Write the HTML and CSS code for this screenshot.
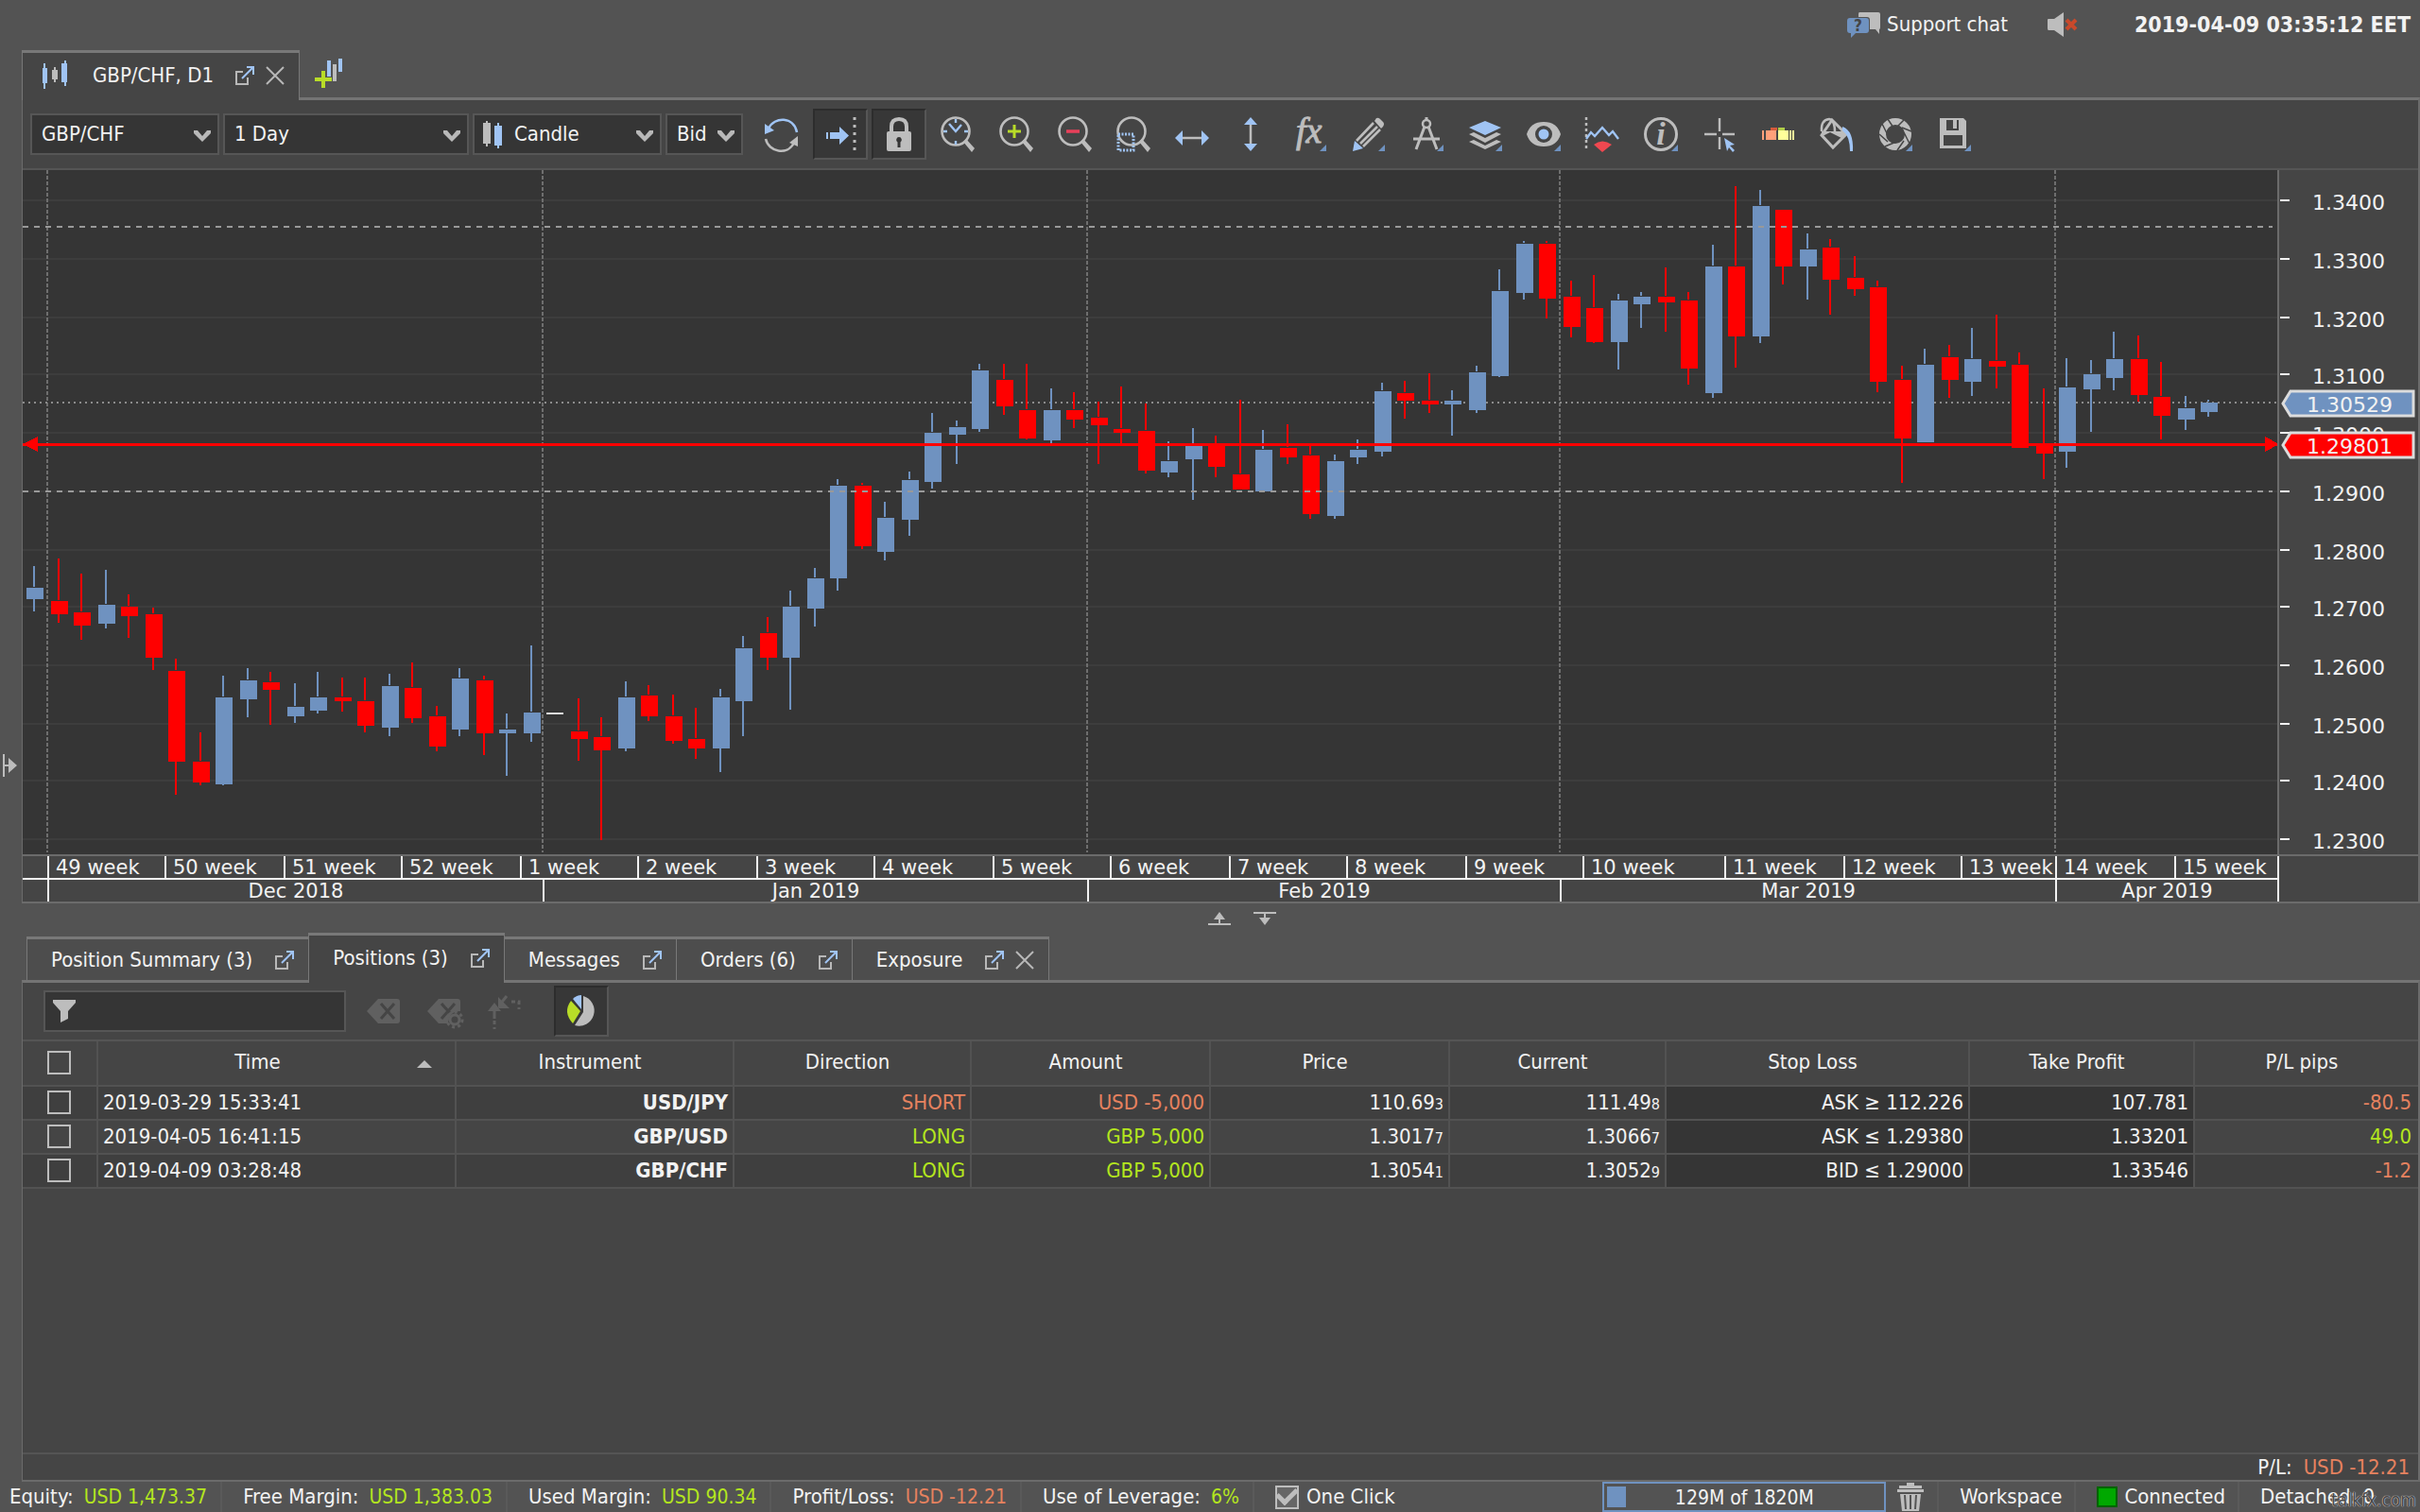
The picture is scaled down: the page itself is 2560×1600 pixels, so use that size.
FILE: index.html
```html
<!DOCTYPE html>
<html lang="en">
<head>
<meta charset="utf-8">
<title>GBP/CHF, D1</title>
<link rel="stylesheet" href="styles.css">
</head>
<body>
<svg class="defs" aria-hidden="true">
  <symbol id="popout" viewBox="0 0 22 22"><path d="M9 7H2v13h12v-7" fill="none" stroke="#b8b8b8" stroke-width="2"/><path d="M8 14 19 3M13 2h7v8" fill="none" stroke="#a0c4f4" stroke-width="2"/></symbol>
  <symbol id="close" viewBox="0 0 22 22"><path d="M2 2 20 20M20 2 2 20" fill="none" stroke="#b8b8b8" stroke-width="2"/></symbol>
  <symbol id="chev" viewBox="0 0 20 14"><path d="M1 1h4l5 6 5-6h4v3l-9 9-9-9z" fill="#b8b8b8"/></symbol>
  <symbol id="corner" viewBox="0 0 40 40"><path d="M38 31v7h-7z" fill="#6f92c0"/></symbol>
  <symbol id="lens" viewBox="0 0 40 40"><circle cx="18" cy="17" r="14.5" fill="none" stroke="#bdbdbd" stroke-width="2.6"/><path d="M26 28l3-3 9 10-3 4z" fill="#bdbdbd"/></symbol>
</svg>

<header class="topbar">
  <a class="support" href="#chat">
    <svg class="ico-chat" viewBox="0 0 36 28"><path d="M13 1h20q2 0 2 2v14q0 2-1 2v5l-4-5h-6V9q0-3-3-3h-9V3q0-2 1-2z" fill="#bdbdbd"/><path d="M3 7h17q3 0 3 3v10q0 3-3 3H9l-5 5v-5H3q-3 0-3-3V10q0-3 3-3z" fill="#6f92c0"/><text x="11.500" y="21" class="chat-q">?</text></svg>
    <span>Support chat</span>
  </a>
  <button class="plain" aria-label="Sound off"><svg class="ico-sound" viewBox="0 0 34 28"><path d="M0 9q0-1 1-1h6L17 1v26L7 20H1q-1 0-1-2z" fill="#bdbdbd"/><path d="M20 9l10 10M30 9 20 19" stroke="#c9492b" stroke-width="4"/></svg></button>
  <time class="clock">2019-04-09 03:35:12 EET</time>
</header>

<div class="main">
  <aside class="rail"><svg class="ico-rail" viewBox="0 0 16 26"><path d="M1 1v24M1 13h7" stroke="#bdbdbd" stroke-width="2"/><path d="M6 5l9 8-9 8z" fill="#bdbdbd"/></svg></aside>
  <div class="column">
    <div class="tabs chart-tabs">
      <div class="tab active">
        <svg class="ico-candles" viewBox="0 0 28 32"><path d="M3 3v27M25 0v27" stroke="#a0c4f4" stroke-width="2"/><path d="M1 8h5v16H1zM21 3h6v20h-6z" fill="#a0c4f4"/><path d="M14 7v16" stroke="#bdbdbd" stroke-width="2"/><path d="M11 10h6v10h-6z" fill="#bdbdbd"/></svg>
        <button class="plain label">GBP/CHF, D1</button>
        <button class="plain" aria-label="Detach"><svg class="ico-s"><use href="#popout"/></svg></button>
        <button class="plain" aria-label="Close"><svg class="ico-s"><use href="#close"/></svg></button>
      </div>
      <button class="plain add" aria-label="New chart"><svg class="ico-add" viewBox="0 0 30 32"><path d="M15 3v17M27 1v14" stroke="#a0c4f4" stroke-width="4"/><path d="M21 7v18" stroke="#bdbdbd" stroke-width="4"/><path d="M9 14v18M0 23h18" stroke="#b8dc28" stroke-width="4"/></svg></button>
    </div>

    <section class="panel">
      <div class="toolbar">
        <div class="pick p1"><select aria-label="Instrument"><option>GBP/CHF</option></select><svg class="ico-chev"><use href="#chev"/></svg></div>
        <div class="pick p2"><select aria-label="Period"><option>1 Day</option></select><svg class="ico-chev"><use href="#chev"/></svg></div>
        <div class="pick p3"><svg class="ico-type" viewBox="0 0 22 30"><path d="M5 1v27" stroke="#bdbdbd" stroke-width="2"/><path d="M1 3h8v22H1z" fill="#bdbdbd"/><path d="M17 3v27" stroke="#a0c4f4" stroke-width="2"/><path d="M13 6h8v21h-8z" fill="#a0c4f4"/></svg><select aria-label="Chart type"><option>Candle</option></select><svg class="ico-chev"><use href="#chev"/></svg></div>
        <div class="pick p4"><select aria-label="Side"><option>Bid</option></select><svg class="ico-chev"><use href="#chev"/></svg></div>
        <div class="tools">
          <button aria-label="Refresh"><svg viewBox="0 0 40 40"><path d="M6 14C12 1 33 1 36 18" fill="none" stroke="#a0c4f4" stroke-width="2.500"/><path d="M2 9v11l10-4z" fill="#a0c4f4"/><path d="M3 25c3 14 23 18 30 4" fill="none" stroke="#bdbdbd" stroke-width="2.500"/><path d="M37 22v11l-9-4z" fill="#bdbdbd"/></svg></button>
          <button class="on" aria-label="Autoshift"><svg viewBox="0 0 40 40"><path d="M35 2v36" stroke="#bdbdbd" stroke-width="3" stroke-dasharray="3 5"/><path d="M5 18h2v7H5zM9 18h10v-6l10 9.500-10 9.500v-6H9z" fill="#a0c4f4"/></svg></button>
          <button class="on" aria-label="Lock"><svg viewBox="0 0 40 40"><path d="M12 18v-6q0-8 8-8t8 8v6" fill="none" stroke="#bdbdbd" stroke-width="4"/><rect x="7" y="17" width="26" height="21" rx="2" fill="#bdbdbd"/><path d="M20 23a3 3 0 0 1 1.500 5.500V34h-3v-5.500A3 3 0 0 1 20 23z" fill="#353535"/></svg></button>
          <button aria-label="Zoom to period"><svg viewBox="0 0 40 40"><use href="#lens"/><path d="M18 4v4M18 27v4M5 17h4M27 17h4M11 9l7 8 6-7" fill="none" stroke="#a0c4f4" stroke-width="2.400"/></svg></button>
          <button aria-label="Zoom in"><svg viewBox="0 0 40 40"><use href="#lens"/><path d="M18 10v14M11 17h14" stroke="#b8dc28" stroke-width="3"/></svg></button>
          <button aria-label="Zoom out"><svg viewBox="0 0 40 40"><use href="#lens"/><path d="M11 17h14" stroke="#e8405a" stroke-width="3.500"/></svg></button>
          <button aria-label="Zoom area"><svg viewBox="0 0 40 40"><use href="#lens"/><path d="M4 20h16v17H4z" fill="none" stroke="#a0c4f4" stroke-width="3" stroke-dasharray="2 1.500"/></svg></button>
          <button aria-label="Fit width"><svg viewBox="0 0 40 40"><path d="M8 24h24" stroke="#bdbdbd" stroke-width="2.500"/><path d="M10 16v16l-8-8zM30 16v16l8-8z" fill="#a0c4f4"/></svg></button>
          <button aria-label="Fit height"><svg viewBox="0 0 40 40"><path d="M20 8v24" stroke="#bdbdbd" stroke-width="2.500"/><path d="M13 10h14l-7-8zM13 30h14l-7 8z" fill="#a0c4f4"/></svg></button>
          <button aria-label="Indicators"><svg viewBox="0 0 40 40"><text x="6" y="29" class="fx">fx</text><use href="#corner"/></svg></button>
          <button aria-label="Drawings"><svg viewBox="0 0 40 40"><path d="M29 3q2-1 4 1l3 3q2 2 0 5l-2 2-7-8z" fill="#bdbdbd"/><path d="M8 27 26 8M12 30 30 12M15 33 33 15" stroke="#bdbdbd" stroke-width="2.600"/><path d="M6 27l9 8-11 3z" fill="#a0c4f4"/><use href="#corner"/></svg></button>
          <button aria-label="Measure"><svg viewBox="0 0 40 40"><path d="M20 2v5M18 12 9 36M22 12l9 24M6 25h28" fill="none" stroke="#bdbdbd" stroke-width="3"/><circle cx="20" cy="9" r="4" fill="#454545" stroke="#bdbdbd" stroke-width="2.500"/><use href="#corner"/></svg></button>
          <button aria-label="Layers"><svg viewBox="0 0 40 40"><path d="M20 6l17 7-17 8L3 13z" fill="#a0c4f4"/><path d="M3 20l5-2 12 6 12-6 5 2-17 9zM3 28l5-2 12 6 12-6 5 2-17 8z" fill="#bdbdbd"/><use href="#corner"/></svg></button>
          <button aria-label="Visibility"><svg viewBox="0 0 40 40"><path d="M2 20q4-13 18-13t18 13q-4 13-18 13T2 20z" fill="#bdbdbd"/><circle cx="20" cy="20" r="9" fill="#454545"/><circle cx="20" cy="20" r="5.500" fill="#a0c4f4"/><use href="#corner"/></svg></button>
          <button aria-label="Show trades"><svg viewBox="0 0 40 40"><path d="M3 2v36" stroke="#bdbdbd" stroke-width="2.500" stroke-dasharray="3 3"/><path d="M3 25l5-7 4 4 8-9 7 8 4-4 6 8" fill="none" stroke="#a0c4f4" stroke-width="2.400"/><path d="M11 31q9-7 19 0l-10 8z" fill="#f04850"/></svg></button>
          <button aria-label="Information"><svg viewBox="0 0 40 40"><circle cx="20" cy="20" r="16.500" fill="none" stroke="#bdbdbd" stroke-width="3"/><text x="20" y="31" class="info">i</text><use href="#corner"/></svg></button>
          <button aria-label="Crosshair"><svg viewBox="0 0 40 40"><path d="M20 3v14M20 23v13M4 20h13M23 20h13" stroke="#bdbdbd" stroke-width="2.400"/><path d="M25 24l11 7-5 1 5 5-2 2-4-5-2 4z" fill="#a0c4f4"/></svg></button>
          <button aria-label="Depth"><svg viewBox="0 0 40 40"><path d="M3 16h2v10H3zM7 16h11v10H7z" fill="#ffa07a"/><path d="M12 13h7v3h-7z" fill="#d65b3c"/><path d="M20 16h11v10H20zM32 16h2v10h-2zM35 16h2v10h-2z" fill="#ffff9a"/><path d="M20 13h7v3h-7z" fill="#b0cc48"/></svg></button>
          <button aria-label="Theme"><svg viewBox="0 0 40 40"><path d="M15 5 30 20 16 34 4 21z" fill="none" stroke="#bdbdbd" stroke-width="3"/><path d="M4 17q-1-12 8-13 6 1 6 14" fill="none" stroke="#bdbdbd" stroke-width="2.500"/><path d="M4 17h24l3 3-6 4-12-6-8 4z" fill="#bdbdbd"/><path d="M26 12q12 4 11 26h-3q0-16-8-22z" fill="#a0c4f4"/></svg></button>
          <button aria-label="Snapshot"><svg viewBox="0 0 40 40"><circle cx="20" cy="20" r="13.500" fill="none" stroke="#bdbdbd" stroke-width="7"/><path d="M12 4l6 9M29 5l-7 7M37 17l-10-4M35 30l-6-12M22 37l7-10M9 33l12-5M3 20l9 8M6 9l5 10" stroke="#454545" stroke-width="1.500"/><use href="#corner"/></svg></button>
          <button aria-label="Save"><svg viewBox="0 0 40 40"><path d="M5 3h25l3 3v29H5z" fill="#bdbdbd"/><path d="M12 5h13v11H12zM9 21h20v11H9z" fill="#454545"/><path d="M19 5h4v9h-4z" fill="#bdbdbd"/><use href="#corner"/></svg></button>
        </div>
      </div>
      <svg class="chart" id="chart" viewBox="24 180 2534 724" role="img" aria-label="GBP/CHF daily candles"></svg>
      <div class="axis">
        <div class="spans">
          <div class="weeks" id="weeks"></div>
          <div class="months" id="months"></div>
        </div>
      </div>
    </section>

    <div class="splitter">
      <svg viewBox="0 0 24 14"><path d="M12 0l6 8h-5v4h11v2H0v-2h11V8H6z" fill="#bdbdbd"/></svg>
      <svg viewBox="0 0 24 14"><path d="M12 14l6-8h-5V2h11V0H0v2h11v4H6z" fill="#bdbdbd"/></svg>
    </div>

    <div class="tabs low-tabs">
      <div class="tab"><button class="plain label">Position Summary (3)</button><button class="plain" aria-label="Detach"><svg class="ico-s"><use href="#popout"/></svg></button></div>
      <div class="tab active"><button class="plain label">Positions (3)</button><button class="plain" aria-label="Detach"><svg class="ico-s"><use href="#popout"/></svg></button></div>
      <div class="tab"><button class="plain label">Messages</button><button class="plain" aria-label="Detach"><svg class="ico-s"><use href="#popout"/></svg></button></div>
      <div class="tab"><button class="plain label">Orders (6)</button><button class="plain" aria-label="Detach"><svg class="ico-s"><use href="#popout"/></svg></button></div>
      <div class="tab closable"><button class="plain label">Exposure</button><button class="plain" aria-label="Detach"><svg class="ico-s"><use href="#popout"/></svg></button><button class="plain" aria-label="Close"><svg class="ico-s"><use href="#close"/></svg></button></div>
    </div>

    <section class="panel positions">
      <div class="filterbar">
        <div class="filter"><svg class="ico-funnel" viewBox="0 0 24 24"><path d="M0 0h24v3l-8 9v8l-8 4V12L0 3z" fill="#bdbdbd"/></svg><input type="text" aria-label="Filter"></div>
        <button class="plain dim" aria-label="Close position"><svg viewBox="0 0 40 40"><path d="M14 7h20q3 0 3 3v20q0 3-3 3H14L2 20z" fill="#606060"/><path d="M17 12l14 16M31 12 17 28" stroke="#454545" stroke-width="3"/></svg></button>
        <button class="plain dim" aria-label="Close with conditions"><svg viewBox="0 0 40 40"><path d="M14 7h20q3 0 3 3v10q-12 0-13 13H14L2 20z" fill="#606060"/><path d="M17 12l9 10M31 12 17 28" stroke="#454545" stroke-width="3"/><circle cx="31" cy="29" r="5" fill="none" stroke="#606060" stroke-width="3"/><circle cx="31" cy="29" r="8" fill="none" stroke="#606060" stroke-width="3" stroke-dasharray="3 3.200"/></svg></button>
        <button class="plain dim" aria-label="Reverse"><svg viewBox="0 0 40 40"><path d="M9 28V16M14 14l8-10" fill="none" stroke="#606060" stroke-width="3"/><path d="M2 20l7-9 7 9zM13 5v12h12z" fill="#606060"/><path d="M27 10h8v8M9 30v9" fill="none" stroke="#606060" stroke-width="3" stroke-dasharray="4 3"/></svg></button>
        <button class="on" aria-label="Exposure chart"><svg viewBox="0 0 40 40"><path d="M22 21V4a16 16 0 1 1-9 31z" fill="#bdbdbd"/><path d="M19 20 11 33Q0 21 9 9z" fill="#b8dc28"/><path d="M20 18 11 7q4-4 9-4z" fill="#a0c4f4"/></svg></button>
      </div>
      <table>
        <colgroup><col class="c0"><col class="c1"><col class="c2"><col class="c3"><col class="c4"><col class="c5"><col class="c6"><col class="c7"><col class="c8"><col class="c9"></colgroup>
        <thead><tr>
          <th class="tick"><input type="checkbox" aria-label="Select all"></th>
          <th class="sorted">Time<svg class="ico-sort" viewBox="0 0 16 8"><path d="M8 0l8 8H0z" fill="#bdbdbd"/></svg></th>
          <th>Instrument</th><th>Direction</th><th>Amount</th><th>Price</th><th>Current</th><th>Stop Loss</th><th>Take Profit</th><th>P/L pips</th>
        </tr></thead>
        <tbody>
          <tr><td class="tick"><input type="checkbox" aria-label="USD/JPY"></td><td class="time">2019-03-29 15:33:41</td><td class="bold">USD/JPY</td><td class="neg">SHORT</td><td class="neg">USD -5,000</td><td>110.69<small>3</small></td><td>111.49<small>8</small></td><td class="edit">ASK ≥ 112.226</td><td class="edit">107.781</td><td class="neg">-80.5</td></tr>
          <tr><td class="tick"><input type="checkbox" aria-label="GBP/USD"></td><td class="time">2019-04-05 16:41:15</td><td class="bold">GBP/USD</td><td class="pos">LONG</td><td class="pos">GBP 5,000</td><td>1.3017<small>7</small></td><td>1.3066<small>7</small></td><td class="edit">ASK ≤ 1.29380</td><td class="edit">1.33201</td><td class="pos">49.0</td></tr>
          <tr><td class="tick"><input type="checkbox" aria-label="GBP/CHF"></td><td class="time">2019-04-09 03:28:48</td><td class="bold">GBP/CHF</td><td class="pos">LONG</td><td class="pos">GBP 5,000</td><td>1.3054<small>1</small></td><td>1.3052<small>9</small></td><td class="edit">BID ≤ 1.29000</td><td class="edit">1.33546</td><td class="neg">-1.2</td></tr>
        </tbody>
      </table>
      <div class="total"><span>P/L:</span><span class="neg">USD -12.21</span></div>
    </section>
  </div>
</div>

<footer class="status">
  <div class="stat"><span>Equity:</span><span class="sum pos">USD 1,473.37</span></div>
  <div class="stat"><span>Free Margin:</span><span class="sum pos">USD 1,383.03</span></div>
  <div class="stat"><span>Used Margin:</span><span class="sum pos">USD 90.34</span></div>
  <div class="stat"><span>Profit/Loss:</span><span class="sum neg">USD -12.21</span></div>
  <div class="stat"><span>Use of Leverage:</span><span class="sum pos">6%</span></div>
  <label class="oneclick"><input type="checkbox" checked>One Click</label>
  <div class="right">
    <div class="memory"><div class="used"></div><span>129M of 1820M</span></div>
    <button class="plain trash" aria-label="Free memory"><svg viewBox="0 0 28 30"><path d="M10 3V0h8v3h8v3H2V3zM0 7h28v3H0z" fill="#bdbdbd"/><path d="M3 12h22l-2 18H5z" fill="#bdbdbd"/><path d="M8 13l1 15M14 13v15M20 13l-1 15" stroke="#555" stroke-width="2"/></svg></button>
    <div class="stat">Workspace</div>
    <div class="stat conn"><i class="lamp"></i>Connected</div>
    <div class="stat last">Detached: 0<span class="mark">talkfx.com</span></div>
  </div>
</footer>
<script src="chart.js"></script>
</body>
</html>
```
FILE: styles.css
```css
* { box-sizing: border-box; }
body { margin: 0; min-height: 100vh; display: flex; flex-direction: column; background: #535353; color: #f2f2f2; font: 22px/28px "DejaVu Sans Condensed", "Noto Sans", sans-serif; }
button, input, select { font: inherit; color: inherit; }
button { cursor: pointer; }
.plain { border: 0; background: none; padding: 0; display: block; }
.defs { position: absolute; width: 0; height: 0; }
svg { display: block; flex: none; overflow: visible; }
.pos { color: #b4e61e; }
.neg { color: #e6825f; }

.topbar { height: 53px; display: flex; justify-content: flex-end; align-items: flex-start; padding: 12px 10px 0 0; }
.support { display: flex; gap: 6px; color: inherit; text-decoration: none; margin-right: 42px; }
.ico-chat { width: 36px; height: 28px; }
.chat-q { font-size: 17px; font-weight: 700; fill: #454545; text-anchor: middle; }
.ico-sound { width: 34px; height: 28px; }
.clock { font-size: 23px; font-weight: 700; margin-left: 58px; }

.main { flex: 1; display: flex; }
.rail { width: 23px; padding: 744px 0 0 3px; }
.ico-rail { width: 16px; height: 26px; }
.column { flex: 1; min-width: 0; display: flex; flex-direction: column; }

.tabs { display: flex; align-items: flex-end; }
.tab { display: flex; align-items: center; border: 1px solid #787878; border-top: 3px solid #787878; border-bottom: 0; background: #4d4d4d; }
.tab.active { background: #454545; margin-bottom: -3px; z-index: 1; }
.ico-s { width: 22px; height: 22px; }
.chart-tabs { height: 50px; }
.chart-tabs .tab { height: 53px; padding: 0 14px 3px 20px; gap: 10px; }
.chart-tabs .label { margin: 0 12px 0 16px; }
.ico-candles { width: 28px; height: 32px; }
.add { align-self: flex-start; padding: 8px 16px; }
.ico-add { width: 30px; height: 32px; }

.panel { border: 2px solid #6b6b6b; border-top: 3px solid #747474; border-left-width: 1px; background: #454545; }
.toolbar { height: 74px; display: flex; align-items: center; padding: 0 8px; gap: 4px; border-bottom: 2px solid #555; }
.pick { position: relative; height: 44px; border: 2px solid #565656; background: #353535; display: flex; align-items: center; }
.pick select { appearance: none; border: 0; background: none; width: 100%; height: 100%; padding: 0 32px 0 10px; outline: 0; }
.pick .ico-type + select { padding-left: 12px; }
.ico-chev { position: absolute; right: 6px; top: 15px; width: 20px; height: 14px; pointer-events: none; }
.ico-type { width: 22px; height: 30px; margin-left: 8px; }
.p1 { width: 200px; }
.p2 { width: 260px; }
.p3 { width: 200px; }
.p4 { width: 82px; }
.tools { display: flex; gap: 4px; margin-left: 8px; }
.tools button, .filterbar .on { width: 58px; height: 54px; border: 2px solid transparent; background: none; padding: 0; display: grid; place-items: center; }
.tools svg, .filterbar button svg { width: 40px; height: 40px; }
.tools .on, .filterbar .on { background: #373737; border-color: #2d2d2d #565656 #565656 #2d2d2d; }
.fx { font: italic 38px "Liberation Serif", serif; fill: #bdbdbd; stroke: #bdbdbd; stroke-width: 1px; }
.info { font: italic 700 34px "Liberation Serif", serif; fill: #bdbdbd; text-anchor: middle; }

.chart { width: 100%; height: auto; background: #454545; font: 22px "DejaVu Sans", sans-serif; shape-rendering: crispEdges; }
.chart .tag { shape-rendering: auto; stroke: #dcdcdc; stroke-width: 3; }
.chart text { fill: #f2f2f2; }
.axis { display: grid; grid-template-columns: 2387fr 147fr; border-top: 2px solid #6b6b6b; font: 21px/24px "DejaVu Sans", sans-serif; }
.spans { border-right: 2px solid #f2f2f2; }
.weeks, .months { display: grid; }
.weeks { border-bottom: 2px solid #f2f2f2; }
.weeks span, .months span { height: 23px; white-space: nowrap; border-left: 2px solid #f2f2f2; }
.weeks span { padding-left: 7px; }
.months span { text-align: center; }
.weeks span:first-child, .months span:first-child { border-left: 0; }

.splitter { height: 31px; display: flex; justify-content: center; gap: 24px; padding: 9px 0 0 44px; }
.splitter svg { width: 24px; height: 14px; }

.low-tabs { padding-left: 5px; height: 50px; }
.low-tabs .tab { height: 46px; padding: 0 14px 0 25px; gap: 23px; margin-right: -1px; }
.low-tabs .tab.active { height: 53px; padding-bottom: 3px; }
.low-tabs .closable .plain:last-child { margin-left: -13px; }

.positions { flex: 1; display: flex; flex-direction: column; }
.filterbar { height: 62px; display: flex; align-items: center; padding: 0 22px; border-bottom: 2px solid #555; }
.filter { width: 320px; height: 44px; border: 2px solid #565656; background: #353535; display: flex; align-items: center; padding-left: 8px; margin-right: 20px; }
.filter input { border: 0; background: none; flex: 1; min-width: 0; outline: 0; }
.ico-funnel { width: 24px; height: 24px; }
.dim { margin-right: 24px; }
.filterbar .on { margin-left: 8px; }
table { width: 100%; table-layout: fixed; border-collapse: separate; border-spacing: 0; }
th, td { border-right: 2px solid #525252; border-bottom: 2px solid #525252; white-space: nowrap; }
th:last-child, td:last-child { border-right: 0; }
th { height: 48px; font-weight: 400; padding: 0 10px 2px 0; position: relative; }
th.sorted { padding-right: 40px; }
.ico-sort { position: absolute; right: 24px; top: 20px; width: 16px; height: 8px; }
td { height: 36px; padding: 0 5px; text-align: right; line-height: 32px; }
td:last-child { padding-right: 7px; }
tbody tr:nth-child(odd) { background: #3f3f3f; }
td.edit { background: #353535; }
td.time { text-align: left; }
.bold { font-weight: 700; }
small { font-size: 16px; line-height: 16px; }
.tick { text-align: left; padding: 0 0 2px 26px; }
input[type=checkbox] { appearance: none; display: block; width: 25px; height: 25px; margin: 0; border: 2px solid #bdbdbd; background: none; }
.c0 { width: 80px; }
.c1 { width: 379px; }
.c2 { width: 294px; }
.c3 { width: 251px; }
.c4 { width: 253px; }
.c5 { width: 253px; }
.c6 { width: 229px; }
.c7 { width: 321px; }
.c8 { width: 238px; }
.total { margin-top: auto; border-top: 2px solid #555; height: 29px; display: flex; justify-content: flex-end; gap: 12px; padding-right: 9px; }

.status { height: 32px; display: flex; line-height: 32px; }
.stat { display: flex; gap: 11px; padding: 0 14px 0 22px; border-right: 2px solid #5a5a5a; white-space: nowrap; }
.stat:first-child { padding-left: 10px; }
.sum { font-size: 21px; }
.oneclick { display: flex; align-items: center; gap: 8px; padding-left: 22px; }
.oneclick input:checked { display: grid; place-items: center; background: #666; }
.oneclick input:checked::after { content: ""; width: 16px; height: 9px; border: solid #bdbdbd; border-width: 0 0 5px 5px; transform: translateY(-3px) rotate(-45deg); }
.right { margin-left: auto; display: flex; }
.memory { position: relative; width: 300px; height: 32px; border: 2px solid #6f92c0; padding: 3px; text-align: center; line-height: 24px; font-size: 21px; }
.memory .used { position: absolute; left: 3px; top: 3px; bottom: 3px; width: 20px; background: #6f92c0; }
.trash { width: 56px; padding: 0 14px 0 12px; border-right: 2px solid #5a5a5a; }
.trash svg { width: 28px; height: 30px; }
.conn { gap: 7px; }
.lamp { width: 22px; height: 22px; margin-top: 5px; background: #00a800; border: 2px solid #006400; }
.right .stat { padding-right: 13px; }
.right .last { border: 0; position: relative; width: 191px; }
.mark { position: absolute; right: 4px; bottom: 0; font-size: 19px; line-height: 26px; color: #484848; text-shadow: 0 0 1px #ddd, 0 0 1px #ddd; }
```
FILE: chart.js
```js
// Each candle: direction (u/d), high, body top, body bottom, low, in chart units.
const candles = `u599,622,634,647 d591,636,650,659 d607,648,662,677 u603,640,660,665 d629,642,652,675 d643,650,696,709 d697,710,806,841 d775,806,828,831 u715,738,830,831 u707,720,740,759
d711,722,730,767 u723,748,758,765 u711,738,752,755 d717,738,742,753 d717,742,768,775 u713,726,770,779 d701,728,760,765 d747,758,790,795 u707,718,772,779 d715,720,776,799
u755,772,776,821 u683,754,776,785 n754,754,756,756 d739,774,782,805 d759,780,794,889 u721,738,792,795 d725,736,758,763 d735,758,784,787 d749,782,792,803 u729,738,792,817
u673,686,742,779 d653,670,696,709 u625,642,696,751 u601,612,644,663 u507,514,612,625 d511,514,578,581 u531,548,584,593 u499,508,550,567 u437,458,510,517 u445,452,460,491
u385,392,454,457 d385,402,430,439 d385,434,464,465 u411,434,466,470 d415,434,444,453 d425,442,450,491 d409,454,458,469 d427,456,498,501 u467,488,500,505 u453,472,486,529
d461,472,494,505 d423,502,518,518 u455,476,520,520 d449,474,484,491 d469,482,544,549 u481,488,546,549 u465,476,484,491 u405,414,478,483 d403,416,424,443 d395,424,428,437
u413,424,428,461 u387,394,434,437 u285,308,398,399 u255,258,310,317 d255,258,316,337 d297,314,346,357 d291,326,362,363 u311,318,362,391 u309,314,322,347 d283,314,320,351
d309,318,390,407 u259,282,416,421 d197,282,356,389 u201,218,356,363 d222,222,282,301 u247,264,282,317 d253,262,296,333 d271,294,306,313 d297,304,404,415 d387,402,464,511
u369,386,468,468 d365,378,402,421 u347,380,404,419 d333,382,388,411 d373,386,474,474 d411,472,480,507 u379,410,478,495 u381,396,412,457 u351,380,400,413 d355,380,418,425
d383,420,440,465 u419,432,444,455 u423,426,436,441`.split(/\s+/);
const fills = { u: '#6f92c0', d: '#ff0000', n: '#dcdcdc' };
const prices = [212, 274, 336, 396, 458, 520, 582, 642, 704, 766, 826, 888];
const monthStarts = [50, 574, 1150, 1650, 2174];
const right = 2409;

const rect = (x, y, w, h, fill) => `<rect x="${x}" y="${y}" width="${w}" height="${h}" fill="${fill}"/>`;
const line = (x1, y1, x2, y2, stroke, dash) =>
  `<path d="M${x1} ${y1}L${x2} ${y2}" stroke="${stroke}" stroke-width="2" stroke-dasharray="${dash}"/>`;

let out = rect(24, 180, right - 24, 724, '#353535');
prices.forEach(y => { out += rect(24, y - 1, right - 24, 2, '#3d3d3d'); });
monthStarts.forEach(x => { out += line(x, 180, x, 902, '#6e6e6e', '4 2'); });
out += line(24, 426, right, 426, '#8c8c8c', '2 4');
candles.forEach((c, i) => {
  const fill = fills[c[0]];
  const [high, top, bottom, low] = c.slice(1).split(',').map(Number);
  const x = 28 + 25 * i + (i % 2);
  if (top - 1 > high) out += rect(x + 7, high, 2, top - 1 - high, fill);
  out += rect(x, top, 18, bottom - top, fill);
  if (low > bottom) out += rect(x + 7, bottom, 2, low - bottom, fill);
});
out += line(24, 240, right - 5, 240, '#999', '6 6') + line(24, 520, right - 5, 520, '#999', '6 6');
out += rect(24, 469, right - 24, 3, '#ff0000');
out += '<path d="M24 470l16-8v16zM2411 470l-15-8v16z" fill="#ff0000"/>';
out += rect(right, 180, 2, 724, '#6b6b6b');
prices.forEach((y, i) => {
  out += rect(right + 3, y - 1, 10, 2, '#f2f2f2');
  out += `<text x="2446" y="${y + 10}">${(1.34 - i * 0.01).toFixed(4)}</text>`;
});
const tag = (y, fill, label) =>
  `<path class="tag" d="M2415 ${y}l8-13h130v26h-130z" fill="${fill}"/><text x="2440" y="${y + 9}">${label}</text>`;
out += tag(427, '#6f92c0', '1.30529') + tag(471, '#ff0000', '1.29801');
document.getElementById('chart').innerHTML = out;

function fillAxis(id, starts, labels) {
  const el = document.getElementById(id);
  const edges = [24, ...starts, right];
  el.style.gridTemplateColumns = edges.slice(1).map((e, i) => `minmax(0, ${e - edges[i]}fr)`).join(' ');
  el.innerHTML = ['', ...labels].map(t => `<span>${t}</span>`).join('');
}
fillAxis('weeks',
  [50, 174, 300, 424, 550, 674, 800, 924, 1050, 1174, 1300, 1424, 1550, 1674, 1824, 1950, 2074, 2174, 2300],
  [49, 50, 51, 52, 1, 2, 3, 4, 5, 6, 7, 8, 9, 10, 11, 12, 13, 14, 15].map(n => n + ' week'));
fillAxis('months', monthStarts, ['Dec 2018', 'Jan 2019', 'Feb 2019', 'Mar 2019', 'Apr 2019']);
```
